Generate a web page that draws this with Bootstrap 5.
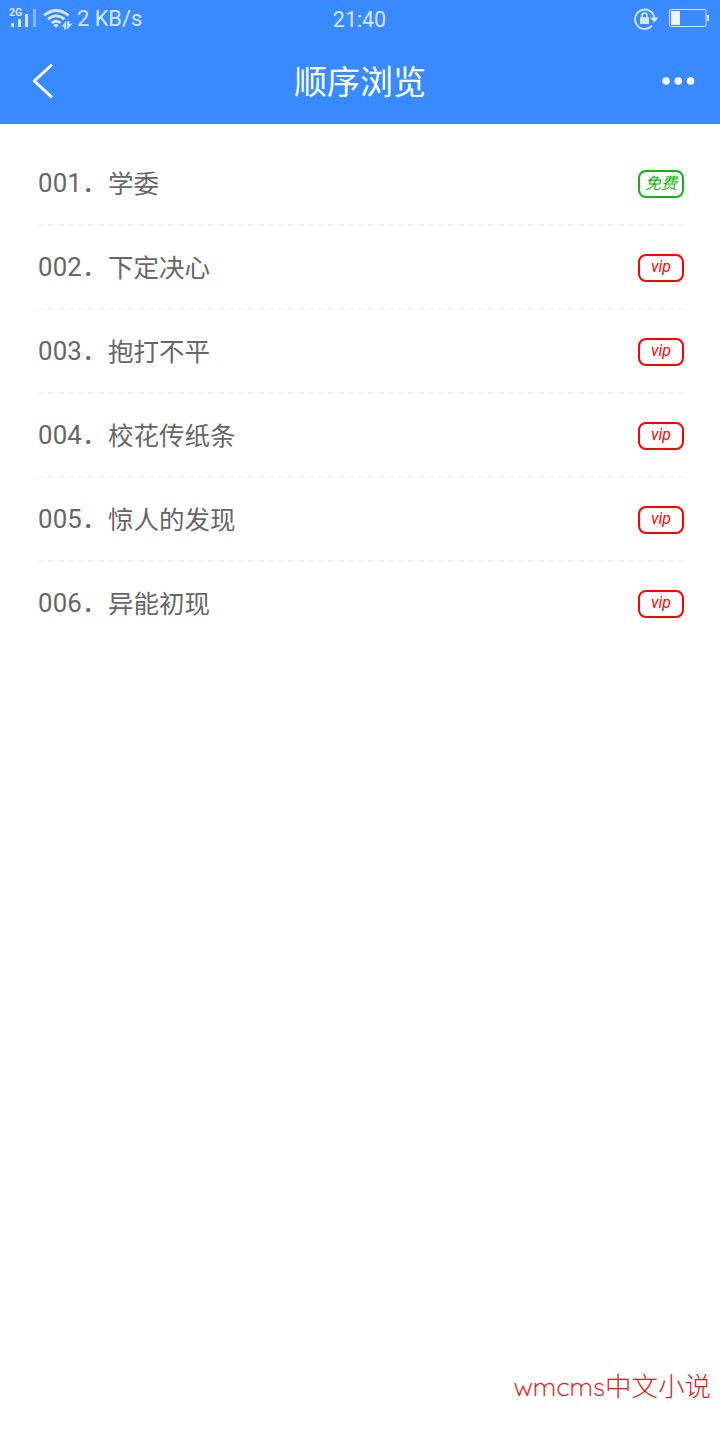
<!DOCTYPE html>
<html lang="zh-CN">
<head>
<meta charset="utf-8">
<meta name="viewport" content="width=device-width, initial-scale=1">
<title>顺序浏览</title>
<link href="https://cdn.jsdelivr.net/npm/bootstrap@5.3.0/dist/css/bootstrap.min.css" rel="stylesheet">
<style>
body{font-family:Roboto,"Noto Sans CJK SC",sans-serif;background:#fff;min-height:1440px}
.top-area{background:#3a8aff;height:124px}
.status-bar{height:38px;font-size:21.8px;line-height:38px;color:#d5e6ff;padding:0 11px 0 9px}
.status-bar>*{flex:1 1 0}
.status-bar time{font-size:21.4px;padding:2px 0 0 1px}
.status-bar svg,.title-bar svg{display:block}
.title-bar{height:86px;padding:0 24px 0 31px}
.title-bar>*{flex:1 1 0}
.title-bar h1{font-size:33px;font-weight:400;line-height:86px;padding:3px 7px 0 0}
.chapters{padding:18px 36px 0 38px}
.chapter{height:84px;border:0;border-bottom:2px dashed #f4f4f4;font-size:25.5px;color:#666;line-height:80px}
.chapter:last-child{border-bottom-color:transparent}
.num{font-size:25.8px;letter-spacing:.15px}
.name{padding:1px 0 0 0}
.tag{width:46px;height:28px;border:2px solid #f00;border-radius:8px;font-size:16px;line-height:22px;font-style:italic;color:#f00;margin-top:2px}
.tag-free{border-color:#0db70d;color:#0db70d;line-height:23px}
.watermark{font-family:Quicksand,Lato,"Noto Sans CJK SC",sans-serif;font-weight:300;font-size:26.5px;line-height:40px;color:#e01a1a;padding:0 9px 34px 0}
.watermark .brand{font-size:25.8px;-webkit-text-stroke:.3px #e01a1a}
</style>
</head>
<body class="d-flex flex-column">
<header class="top-area text-white">
  <div class="status-bar d-flex align-items-center">
    <div class="d-flex align-items-center">
      <svg width="28" height="38" fill="#d5e6ff"><text x="0" y="16" font-size="10.500" font-weight="700">2G</text><path d="M2 23h3v4H2zM9 19h3v8H9zM16 14h3v13h-3z"/><path d="M24 9h3v18h-3z" opacity=".5"/></svg>
      <svg width="32" height="38" class="ms-1" style="margin-right:4px"><g transform="translate(-41 0)" fill="none" stroke="#d5e6ff" stroke-width="2.7"><path d="M44 15.5Q56 5.5 68.500 15.500M48 19.300Q56 12.500 64.500 19.300M51.800 23Q56 19.500 60.500 23"/><path d="M53.300 25.200Q56 23 58.700 25.200L56 27.700z" fill="#d5e6ff" stroke="none"/><path d="M66.200 21v8.300h-2v-2.800h-2.700zM67.300 29.300V21h2v2.800h3z" fill="#d5e6ff" stroke="none"/></g></svg>
      <span>2 KB/s</span>
    </div>
    <time class="text-center">21:40</time>
    <div class="d-flex justify-content-end">
      <svg width="76" height="38"><g transform="translate(-633 0)"><path d="M652 25.700A9.700 9.700 0 1 1 654.300 17.500" fill="none" stroke="#d5e6ff" stroke-width="1.800"/><path d="M650 17.500h8.500l-4.200 5zM640 17.300h9v6.700h-9z" fill="#d5e6ff"/><path d="M642 18v-2.500a2.500 2.500 0 0 1 5 0V18" fill="none" stroke="#d5e6ff" stroke-width="1.600"/><rect x="669.500" y="9.500" width="36.500" height="17" rx="1.500" fill="none" stroke="#d5e6ff"/><path d="M671 11h9v14h-9z" fill="#edf4ff"/><path d="M707 15h2v6h-2z" fill="#d5e6ff"/></g></svg>
    </div>
  </div>
  <nav class="title-bar d-flex align-items-center">
    <a href="#" aria-label="返回"><svg width="24" height="38"><path d="M20 3.500L3.300 19 20 34.500" fill="none" stroke="#fff" stroke-width="3" stroke-linecap="round" stroke-linejoin="round"/></svg></a>
    <h1 class="m-0 text-center text-nowrap">顺序浏览</h1>
    <a href="#" aria-label="更多" class="d-flex justify-content-end"><svg width="36" height="10" fill="#fff"><circle cx="6" cy="5" r="3.800"/><circle cx="18.300" cy="5" r="3.800"/><circle cx="30.500" cy="5" r="3.800"/></svg></a>
  </nav>
</header>
<main class="flex-grow-1">
  <ul class="chapters list-unstyled m-0">
    <li class="chapter d-flex align-items-center"><span class="num">001．</span><span class="name">学委</span><span class="tag tag-free text-center ms-auto">免费</span></li>
    <li class="chapter d-flex align-items-center"><span class="num">002．</span><span class="name">下定决心</span><span class="tag text-center ms-auto">vip</span></li>
    <li class="chapter d-flex align-items-center"><span class="num">003．</span><span class="name">抱打不平</span><span class="tag text-center ms-auto">vip</span></li>
    <li class="chapter d-flex align-items-center"><span class="num">004．</span><span class="name">校花传纸条</span><span class="tag text-center ms-auto">vip</span></li>
    <li class="chapter d-flex align-items-center"><span class="num">005．</span><span class="name">惊人的发现</span><span class="tag text-center ms-auto">vip</span></li>
    <li class="chapter d-flex align-items-center"><span class="num">006．</span><span class="name">异能初现</span><span class="tag text-center ms-auto">vip</span></li>
  </ul>
</main>
<footer class="watermark text-end"><span class="brand">wmcms</span>中文小说</footer>
<script src="https://cdn.jsdelivr.net/npm/bootstrap@5.3.0/dist/js/bootstrap.bundle.min.js"></script>
</body>
</html>
